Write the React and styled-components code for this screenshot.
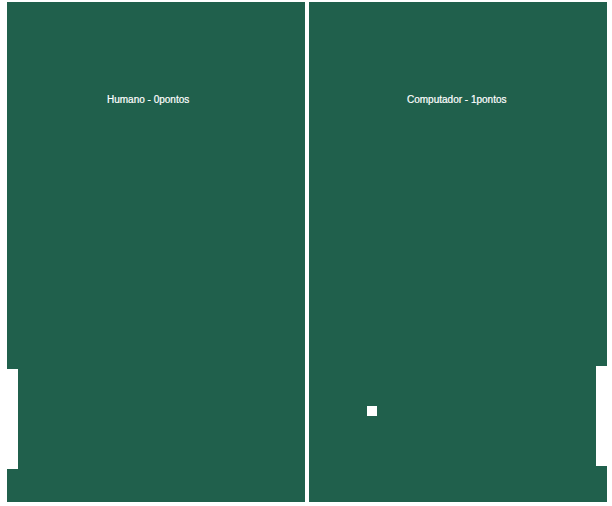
import React from 'react';
import styled, { createGlobalStyle } from 'styled-components';

const GlobalStyle = createGlobalStyle`
  body {
    margin: 0;
    background: #ffffff;
    font-family: "Liberation Sans", Arial, sans-serif;
  }
`;

const Board = styled.div`
  position: relative;
  display: flex;
  width: 600px;
  height: 500px;
  margin: 2px 0 0 7px;
  background-color: #20604c;
`;

const Half = styled.div`
  box-sizing: border-box;
  width: 298px;
  padding: 92px 0 0 ${(props) => props.inset}px;
`;

const Net = styled.div`
  width: 4px;
  background-color: #ffffff;
`;

const Score = styled.div`
  color: #ffffff;
  font-size: 10px;
  line-height: 12px;
  -webkit-text-stroke: 0.2px #ffffff;
`;

const Paddle = styled.div`
  position: absolute;
  top: ${(props) => props.y}px;
  ${(props) => (props.side === 'left' ? 'left: 0;' : 'right: 0;')}
  width: 11px;
  height: 100px;
  background-color: #ffffff;
`;

const Ball = styled.div`
  position: absolute;
  left: ${(props) => props.x}px;
  top: ${(props) => props.y}px;
  width: 10px;
  height: 10px;
  background-color: #ffffff;
`;

export default function App() {
  const players = [
    { name: 'Humano', points: 0 },
    { name: 'Computador', points: 1 },
  ];

  return (
    <>
      <GlobalStyle />
      <Board>
        <Half inset={100}>
          <Score>{`${players[0].name} - ${players[0].points}pontos`}</Score>
        </Half>
        <Net />
        <Half inset={98}>
          <Score>{`${players[1].name} - ${players[1].points}pontos`}</Score>
        </Half>
        <Paddle side="left" y={367} />
        <Paddle side="right" y={364} />
        <Ball x={360} y={404} />
      </Board>
    </>
  );
}
